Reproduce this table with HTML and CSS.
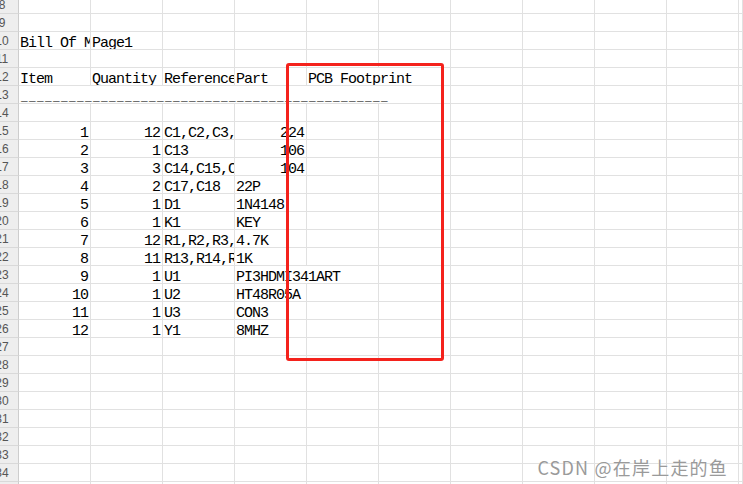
FILE: index.html
```html
<!DOCTYPE html>
<html>
<head>
<meta charset="utf-8">
<title>Bill Of Materials</title>
<link rel="stylesheet" href="styles.css">
</head>
<body>
<div class="sheet">
  <div class="r"><span class="h">8</span><span></span><span></span><span></span><span></span><span></span><span></span><span></span><span></span><span></span><span></span><span></span></div>
  <div class="r"><span class="h">9</span><span></span><span></span><span></span><span></span><span></span><span></span><span></span><span></span><span></span><span></span><span></span></div>
  <div class="r"><span class="h">10</span><span>Bill Of Materials</span><span>Page1</span><span></span><span></span><span></span><span></span><span></span><span></span><span></span><span></span><span></span></div>
  <div class="r"><span class="h">11</span><span></span><span></span><span></span><span></span><span></span><span></span><span></span><span></span><span></span><span></span><span></span></div>
  <div class="r"><span class="h">12</span><span>Item</span><span>Quantity</span><span>Reference</span><span>Part</span><span class="s2">PCB Footprint</span><span></span><span></span><span></span><span></span><span></span></div>
  <div class="r"><span class="h">13</span><span class="s6 u">______________________________________________</span><span></span><span></span><span></span><span></span><span></span></div>
  <div class="r"><span class="h">14</span><span></span><span></span><span></span><span></span><span></span><span></span><span></span><span></span><span></span><span></span><span></span></div>
  <div class="r"><span class="h">15</span><span class="n">1</span><span class="n">12</span><span>C1,C2,C3,C4,C5,C6,C7</span><span class="n">224</span><span></span><span></span><span></span><span></span><span></span><span></span><span></span></div>
  <div class="r"><span class="h">16</span><span class="n">2</span><span class="n">1</span><span>C13</span><span class="n">106</span><span></span><span></span><span></span><span></span><span></span><span></span><span></span></div>
  <div class="r"><span class="h">17</span><span class="n">3</span><span class="n">3</span><span>C14,C15,C16</span><span class="n">104</span><span></span><span></span><span></span><span></span><span></span><span></span><span></span></div>
  <div class="r"><span class="h">18</span><span class="n">4</span><span class="n">2</span><span>C17,C18</span><span>22P</span><span></span><span></span><span></span><span></span><span></span><span></span><span></span></div>
  <div class="r"><span class="h">19</span><span class="n">5</span><span class="n">1</span><span>D1</span><span>1N4148</span><span></span><span></span><span></span><span></span><span></span><span></span><span></span></div>
  <div class="r"><span class="h">20</span><span class="n">6</span><span class="n">1</span><span>K1</span><span>KEY</span><span></span><span></span><span></span><span></span><span></span><span></span><span></span></div>
  <div class="r"><span class="h">21</span><span class="n">7</span><span class="n">12</span><span>R1,R2,R3,R4,R5,R6</span><span>4.7K</span><span></span><span></span><span></span><span></span><span></span><span></span><span></span></div>
  <div class="r"><span class="h">22</span><span class="n">8</span><span class="n">11</span><span>R13,R14,R15,R16</span><span>1K</span><span></span><span></span><span></span><span></span><span></span><span></span><span></span></div>
  <div class="r"><span class="h">23</span><span class="n">9</span><span class="n">1</span><span>U1</span><span class="s2">PI3HDMI341ART</span><span></span><span></span><span></span><span></span><span></span><span></span></div>
  <div class="r"><span class="h">24</span><span class="n">10</span><span class="n">1</span><span>U2</span><span>HT48R05A</span><span></span><span></span><span></span><span></span><span></span><span></span><span></span></div>
  <div class="r"><span class="h">25</span><span class="n">11</span><span class="n">1</span><span>U3</span><span>CON3</span><span></span><span></span><span></span><span></span><span></span><span></span><span></span></div>
  <div class="r"><span class="h">26</span><span class="n">12</span><span class="n">1</span><span>Y1</span><span>8MHZ</span><span></span><span></span><span></span><span></span><span></span><span></span><span></span></div>
  <div class="r"><span class="h">27</span><span></span><span></span><span></span><span></span><span></span><span></span><span></span><span></span><span></span><span></span><span></span></div>
  <div class="r"><span class="h">28</span><span></span><span></span><span></span><span></span><span></span><span></span><span></span><span></span><span></span><span></span><span></span></div>
  <div class="r"><span class="h">29</span><span></span><span></span><span></span><span></span><span></span><span></span><span></span><span></span><span></span><span></span><span></span></div>
  <div class="r"><span class="h">30</span><span></span><span></span><span></span><span></span><span></span><span></span><span></span><span></span><span></span><span></span><span></span></div>
  <div class="r"><span class="h">31</span><span></span><span></span><span></span><span></span><span></span><span></span><span></span><span></span><span></span><span></span><span></span></div>
  <div class="r"><span class="h">32</span><span></span><span></span><span></span><span></span><span></span><span></span><span></span><span></span><span></span><span></span><span></span></div>
  <div class="r"><span class="h">33</span><span></span><span></span><span></span><span></span><span></span><span></span><span></span><span></span><span></span><span></span><span></span></div>
  <div class="r"><span class="h">34</span><span></span><span></span><span></span><span></span><span></span><span></span><span></span><span></span><span></span><span></span><span></span></div>
  <div class="r"><span class="h">35</span><span></span><span></span><span></span><span></span><span></span><span></span><span></span><span></span><span></span><span></span><span></span></div>
</div>
<div class="highlight"></div>
<div class="watermark">CSDN @在岸上走的鱼</div>
</body>
</html>
```

FILE: styles.css
```css
html, body {
  margin: 0;
  padding: 0;
  background: #fff;
}

body {
  width: 743px;
  height: 484px;
  overflow: hidden;
  position: relative;
}

.sheet {
  margin: -4px 0 0 -14px;
}

.r {
  display: grid;
  grid-template-columns: 33px repeat(10, 72px) 4px;
  height: 18px;
}

.r > span {
  box-sizing: border-box;
  height: 18px;
  border-right: 1px solid #e1e1e1;
  border-bottom: 1px solid #e1e1e1;
  overflow: hidden;
  white-space: nowrap;
  font: 15px/17px "Liberation Mono", monospace;
  letter-spacing: -1px;
  color: #000;
  padding: 3px 2px 0 1px;
}

.r > .h {
  background: #eeeeee;
  border-right-color: #cdcdcd;
  border-bottom-color: #d9d9d9;
  font: 12px/17px "Liberation Sans", Arial, sans-serif;
  letter-spacing: 0;
  color: #555;
  text-align: center;
  padding: 1px 0 0 0;
}

.r > .n {
  text-align: right;
}

.r > .s2 {
  grid-column: span 2;
}

.r > .s6 {
  grid-column: span 6;
}

.r > .u {
  font-size: 11px;
  font-weight: bold;
  letter-spacing: 1.4px;
  padding-top: 4px;
  padding-left: 2px;
}

.highlight {
  position: absolute;
  left: 286px;
  top: 63px;
  width: 158px;
  height: 298px;
  box-sizing: border-box;
  border: 3px solid #f4221c;
  border-radius: 3px;
}

.watermark {
  position: absolute;
  right: 15px;
  bottom: 8px;
  font: 18px/1 "Noto Sans CJK SC", "Liberation Sans", sans-serif;
  letter-spacing: 1.2px;
  color: #9a9a9a;
  text-shadow: 0 0 1px #fff;
}
```
